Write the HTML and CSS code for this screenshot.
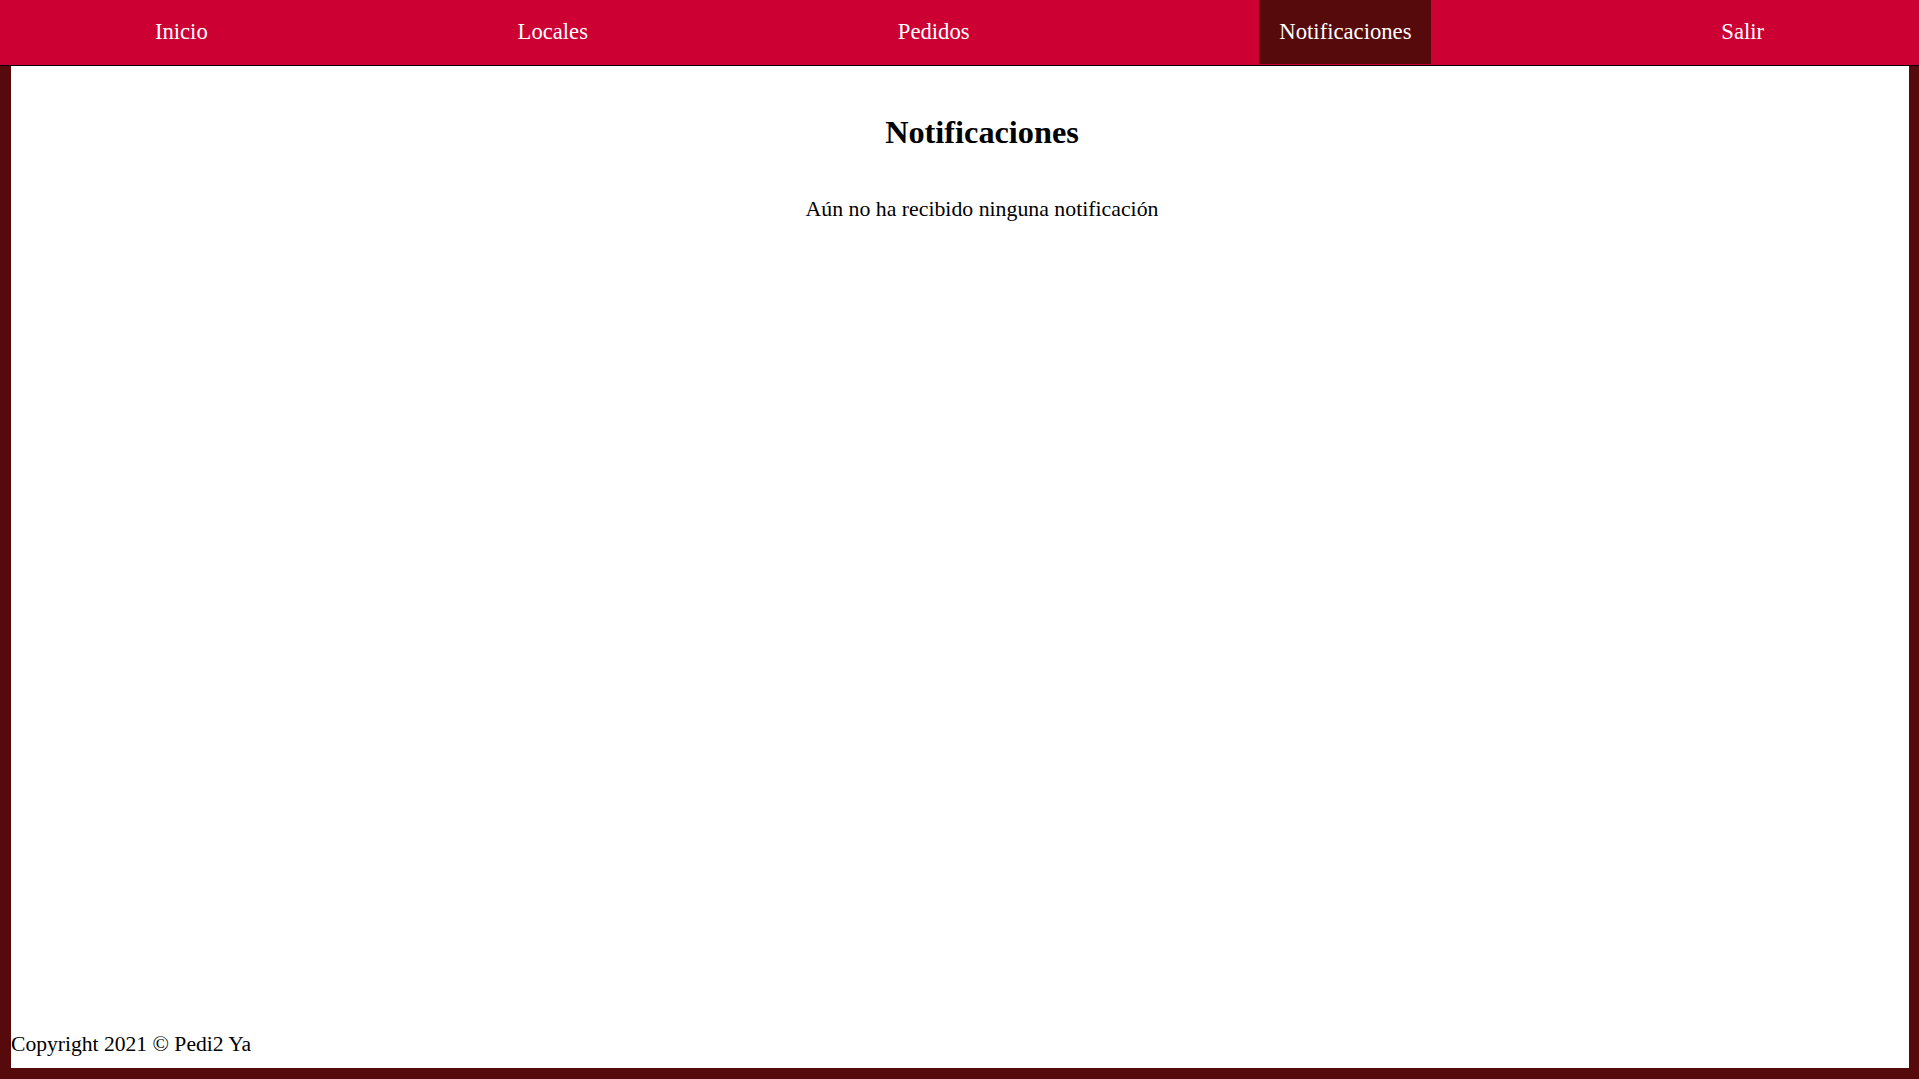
FILE: index.html
```html
<!DOCTYPE html>
<html lang="es">
<head>
<meta charset="utf-8">
<title>Notificaciones - Pedi2 Ya</title>
<link rel="stylesheet" href="styles.css">
</head>
<body>
  <nav class="topnav">
    <a class="nav-item" href="#">Inicio</a>
    <a class="nav-item" href="#">Locales</a>
    <a class="nav-item" href="#">Pedidos</a>
    <a class="nav-item active" href="#">Notificaciones</a>
    <a class="nav-item" href="#">Salir</a>
  </nav>
  <main class="page">
    <section class="content">
      <h2 class="title">Notificaciones</h2>
      <p class="empty">Aún no ha recibido ninguna notificación</p>
    </section>
    <footer class="footer">Copyright 2021 © Pedi2 Ya</footer>
  </main>
</body>
</html>
```

FILE: styles.css
```css
html, body {
  height: 100%;
}

body {
  margin: 0;
  background: #560a0c;
  font-family: "Liberation Serif", "Times New Roman", serif;
  color: #000;
  display: flex;
  flex-direction: column;
}

.topnav {
  height: 65px;
  background: #cc0033;
  border-bottom: 1px solid #000;
  display: flex;
  justify-content: space-around;
  align-items: flex-start;
  flex: none;
}

.nav-item {
  height: 64px;
  line-height: 64px;
  padding: 0 20px;
  color: #fff;
  text-decoration: none;
  font-size: 22.67px;
}

.nav-item.active {
  background: #560a0c;
}

.page {
  flex: 1;
  background: #fff;
  margin: 0 10px 11px 11px;
  display: flex;
  flex-direction: column;
}

.content {
  padding-left: 44px;
  text-align: center;
}

.title {
  margin: 48px 0 0;
  font-size: 32.3px;
  line-height: 37px;
  font-weight: bold;
}

.empty {
  margin: 46px 0 0;
  font-size: 21.8px;
  line-height: 25px;
}

.footer {
  margin-top: auto;
  font-size: 21.6px;
  line-height: 24px;
  padding-bottom: 12px;
}
```
